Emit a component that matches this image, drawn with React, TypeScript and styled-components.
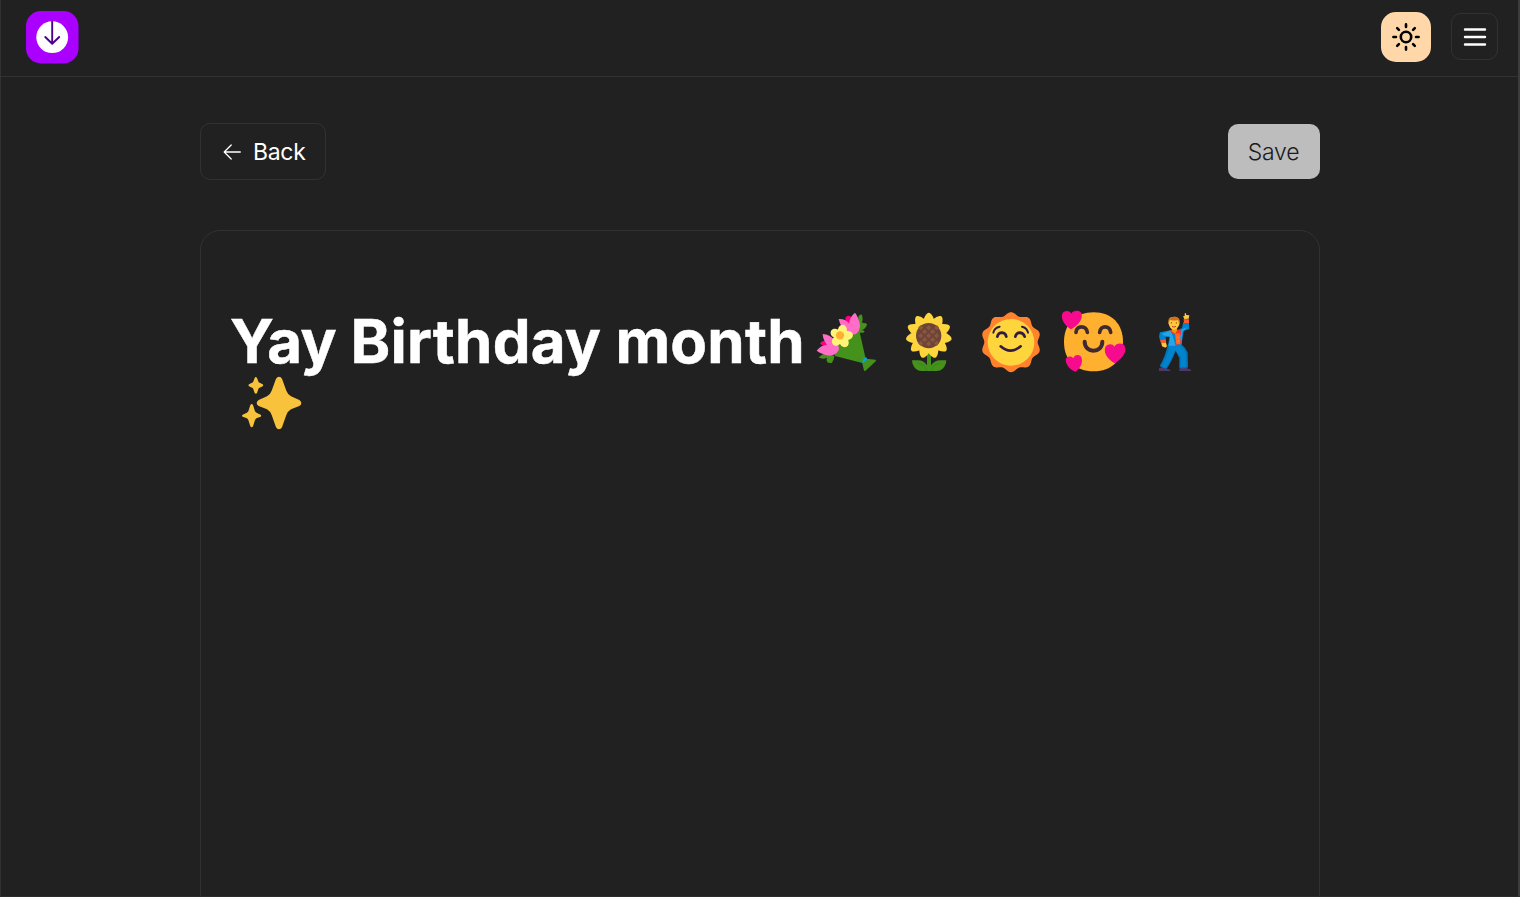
import React from "react";
import styled, { createGlobalStyle } from "styled-components";

const GlobalStyle = createGlobalStyle`
  * { box-sizing: border-box; }
  body {
    margin: 0;
    background: #212121;
    color: #fff;
    font-family: Inter, "Liberation Sans", sans-serif;
    overflow: hidden;
  }
  button { font-family: inherit; cursor: pointer; }
`;

const Page = styled.div`
  height: 897px;
  display: flex;
  flex-direction: column;
  overflow: hidden;
  border-left: 1px solid #323232;
  border-right: 2px solid #3c3c3c;
  border-bottom: 1px solid #2b2b2b;
`;

const Header = styled.header`
  flex: none;
  height: 77px;
  display: flex;
  align-items: flex-start;
  justify-content: space-between;
  padding: 11px 20px 0 25px;
  border-bottom: 1px solid #323232;
`;

const Logo = styled.svg`
  display: block;
  width: 53px;
  height: 53px;
`;

const Actions = styled.div`
  display: flex;
  align-items: center;
  gap: 20px;
  padding-top: 1px;
`;

const IconButton = styled.button<{ $filled?: boolean }>`
  display: flex;
  align-items: center;
  justify-content: center;
  padding: 0;
  width: ${(p) => (p.$filled ? 50 : 47)}px;
  height: ${(p) => (p.$filled ? 50 : 47)}px;
  border-radius: ${(p) => (p.$filled ? 15 : 10)}px;
  border: ${(p) => (p.$filled ? "none" : "1px solid #323232")};
  background: ${(p) => (p.$filled ? "#ffd7a8" : "transparent")};
  margin-top: ${(p) => (p.$filled ? 0 : -1)}px;
  svg { display: block; }
`;

const Main = styled.main`
  flex: 1;
  width: 1120px;
  margin-left: 199px;
  padding-top: 46px;
  display: flex;
  flex-direction: column;
`;

const Toolbar = styled.div`
  display: flex;
  align-items: center;
  justify-content: space-between;
  margin-bottom: 50px;
`;

const BackButton = styled.button`
  display: flex;
  align-items: center;
  width: 126px;
  height: 57px;
  padding: 0 0 0 21px;
  gap: 10px;
  font-size: 23px;
  letter-spacing: -0.3px;
  color: #fff;
  background: transparent;
  border: 1px solid #323232;
  border-radius: 10px;
`;

const SaveButton = styled.button`
  width: 92px;
  height: 55px;
  padding: 0 1px 0 0;
  border: none;
  border-radius: 10px;
  background: #bdbdbd;
  color: #1b1b1b;
  font-size: 23px;
  letter-spacing: -0.2px;
  font-weight: 300;
`;

const Editor = styled.section`
  flex: none;
  height: 760px;
  padding: 81px 30px 0;
  border: 1px solid #323232;
  border-radius: 20px;
`;

const Title = styled.h1`
  margin: 0;
  display: flex;
  flex-wrap: wrap;
  align-items: flex-start;
  font-size: 60px;
  line-height: 60px;
  font-weight: 700;
`;

const TitleText = styled.span`
  width: 575px;
  margin-left: -1px;
  line-height: 58px;
  letter-spacing: 0.2px;
  white-space: nowrap;
  -webkit-text-stroke: 0.5px #fff;
`;

const TightWord = styled.span`
  letter-spacing: -0.5px;
`;

const EmojiSvg = styled.svg`
  display: block;
  width: 82px;
  height: 60px;
  overflow: visible;
`;

function Emoji({ label, x, y = 36, children }: { label: string; x: number; y?: number; children: React.ReactNode }) {
  return (
    <EmojiSvg role="img" aria-label={label} viewBox={`${x} ${y} 246 180`}>
      {children}
    </EmojiSvg>
  );
}

function Bouquet() {
  return (
    <Emoji label="bouquet" x={0}>
      <path d="M162 88L181 172L172 189L90 168L82 148L145 92Z" fill="#44911b" />
      <path d="M41 172Q51 162 68 158L88 168Q88 178 81 188Q73 191 67 187Q63 178 66 173Q53 180 41 172Z" fill="#44911b" />
      <path d="M171 186L184 176L212 179L213 183L181 213L177 212Z" fill="#44911b" />
      <path d="M171 186Q175 174 183 171L187 178L174 190Z" fill="#00a6ed" />
      <path d="M160 50Q165 42 171 44Q175 56 171 68Q186 68 186 75Q180 88 170 91Q178 91 179 95Q174 100 160 98Z" fill="#44911b" />
      <path d="M121 53Q128 44 138 50L143 78L123 73Z" fill="#ff0084" />
      <path d="M101 57Q119 55 132 70Q136 48 150 38Q162 53 165 76Q165 95 151 103Q134 106 122 96Q107 82 101 57Z" fill="#ff6dc6" />
      <path d="M45 131Q48 121 59 123L75 133L68 145Z" fill="#ff0084" />
      <path d="M53 102Q75 104 88 119Q102 133 102 148Q96 165 73 167Q50 163 35 152Q46 136 66 134Q54 120 53 102Z" fill="#ff6dc6" />
      <g fill="#fff478">
        {[10, 82, 154, 226, 298].map((a) => (
          <ellipse key={a} cx="109" cy="90" rx="13.5" ry="16" transform={`rotate(${a} 109 109)`} />
        ))}
      </g>
      <circle cx="105" cy="106" r="12.5" fill="#ffb02e" />
    </Emoji>
  );
}

const CROSSES = [
  [371, 83], [359, 95], [383, 95], [347, 107], [371, 107], [395, 107],
  [359, 119], [383, 119], [371, 131], [347, 83], [395, 83], [347, 130], [395, 130],
];

function Sunflower() {
  return (
    <Emoji label="sunflower" x={246}>
      <path d="M366 155L372 158L378 155V196Q390 181 405 181H424Q423 197 413 206Q406 213 395 213H350Q339 213 332 206Q322 197 321 181H340Q356 181 366 196Z" fill="#44911b" />
      <path d="M338 190Q360 192 366 213M407 190Q383 192 378 213" fill="none" stroke="#3a8118" strokeWidth="2" />
      <g fill="#ffd53e">
        {Array.from({ length: 11 }, (_, i) => (
          <path key={i} d="M352 75C355 54 364 38 371.500 38C379 38 388 54 391 75L371.500 107Z" transform={`rotate(${i * 32.73} 371.500 107)`} />
        ))}
      </g>
      <circle cx="371" cy="107" r="38" fill="#6d4534" />
      <g fill="#8c5543">
        {CROSSES.map(([cx, cy]) => (
          <rect key={`${cx}-${cy}`} x={cx - 5.5} y={cy - 5.5} width="11" height="11" rx="2" transform={`rotate(45 ${cx} ${cy})`} />
        ))}
      </g>
    </Emoji>
  );
}

function SunFace() {
  const points = Array.from({ length: 181 }, (_, i) => {
    const t = (i / 180) * Math.PI * 2;
    const r = 85 + 5 * Math.cos(10 * t);
    return `${(123 + r * Math.sin(t)).toFixed(1)},${(126.5 - r * Math.cos(t)).toFixed(1)}`;
  }).join(" ");
  return (
    <Emoji label="sun with face" x={-3}>
      <polygon points={points} fill="#ff822d" />
      <circle cx="123" cy="127" r="70" fill="#ffd53e" />
      <g fill="none" stroke="#321b41" strokeLinecap="round">
        <path d="M70 98Q73 83 89 80M156 80Q171 83 174 98" strokeWidth="6" />
        <path d="M82 110Q85 98 96 98Q107 99 109 110M136 110Q139 98 150 98Q161 99 164 110" strokeWidth="8" />
        <path d="M92 139Q121 165 152 139" strokeWidth="8" />
      </g>
    </Emoji>
  );
}

function HeartsFace() {
  return (
    <Emoji label="smiling face with hearts" x={243}>
      <path d="M371 37C425 37 459 72 459 126C459 180 425 214 371 214C316 214 282 180 282 126C282 72 316 37 371 37Z" fill="#ffb02e" />
      <g fill="none" stroke="#402a32" strokeWidth="11" strokeLinecap="round">
        <path d="M318 97C319 75 350 75 352 97M389 97C391 75 420 75 422 97" />
        <path d="M344 125C344 161 397 161 397 125" strokeWidth="12" />
      </g>
      <g fill="#f70a8d">
        <path d="M304 41C309 30 327 30 334 38C342 62 317 80 303 88C290 82 272 62 276 43C281 30 300 31 304 41Z" />
        <path d="M433 140C439 128 458 128 464 138C474 160 449 180 435 190C420 183 398 162 406 141C412 130 430 130 433 140Z" />
        <path d="M310 175C313 163 329 162 334 171C341 192 327 207 317 215C305 214 286 195 287 178C292 168 304 167 310 175Z" />
      </g>
    </Emoji>
  );
}

function Dancer() {
  return (
    <Emoji label="man dancing" x={-21}>
      <path d="M57 205Q67 199 76 204L91 210V213H57ZM118 205L138 203L153 209V213H118Z" fill="#533566" />
      <path d="M84 132L124 133Q137 143 143 158L144 202Q130 209 118 203V174L107 153Q94 186 80 206Q69 206 59 198Q76 170 84 132Z" fill="#0074ba" />
      <path d="M88 137L121 138Q134 145 138 163V201H121L123 172L106 151Q93 181 77 204L65 199Q82 171 88 137Z" fill="#0084ce" />
      <path d="M90 91L60 97Q54 110 62 124L78 120L77 111L88 110L84 139L105 142L124 137L131 93L147 87V66H130L126 84L113 91Z" fill="#0084ce" />
      <path d="M93 91L107 137H86L91 110L69 106L66 101ZM128 87L142 82L127 95L124 132L119 134L120 97Z" fill="#26a6e5" />
      <path d="M90 91L106 88L121 90L124 101L120 107L123 132L107 134L106 104L96 100Z" fill="#f8312f" />
      <path d="M105 101L119 99L121 132L109 133Z" fill="#ff6723" />
      <path d="M60 121L77 118L79 128L63 130ZM131 57L147 58V69L132 69Z" fill="#ff592b" />
      <path d="M64 129L78 128L81 139L76 143L66 139Z" fill="#ffc83d" />
      <path d="M134 42Q134 38 137 39L139 45L148 46L146 56L133 57L129 49L134 48Z" fill="#ffc83d" />
      <path d="M96 82H111V92L105 101L95 92Z" fill="#e89b0a" />
      <path d="M87 60Q89 50 103 51Q119 52 118 63L119 70L116 78Q110 89 102 89Q91 87 88 77L85 70Z" fill="#ffc83d" />
      <path d="M86 69Q82 51 97 51Q107 46 116 55Q121 61 117 70L114 60Q101 64 90 59Z" fill="#cf711f" />
      <path d="M94 66V71M109 66V71" stroke="#a55f16" strokeWidth="3" />
      <path d="M96 79Q102 84 108 79" stroke="#bb1d30" strokeWidth="2.500" fill="none" />
      <circle cx="114" cy="112" r="1.500" fill="#ffc83d" />
      <circle cx="115" cy="123" r="1.500" fill="#ffc83d" />
    </Emoji>
  );
}

function Sparkles() {
  return (
    <Emoji label="sparkles" x={33} y={216}>
      <g fill="#f9c23c">
        <path d="M168 236Q172 230 177 230Q183 230 186 236L199 272Q203 283 213 289L238 300Q244 304 244 309Q244 315 238 318L213 328Q203 334 199 345L186 382Q183 388 177 388Q171 388 168 382L155 345Q151 334 141 328L116 318Q110 315 110 309Q110 304 116 300L141 289Q151 283 155 272Z" />
        <path d="M104 234Q107 228 111 234L116 247L128 253Q131 256 128 259L116 265L111 279Q108 284 104 279L99 265L87 259Q84 256 87 253L99 247Z" />
        <path d="M91 315Q95 309 99 315L105 334Q107 338 111 339L122 344Q125 347 122 350L111 354Q107 356 105 360L99 379Q95 385 91 379L85 360Q83 356 79 354L68 350Q64 347 68 344L79 339Q83 338 85 334Z" />
      </g>
    </Emoji>
  );
}

export default function App() {
  return (
    <>
      <GlobalStyle />
      <Page>
        <Header>
          <Logo viewBox="0 0 53 53" aria-label="Home">
            <rect width="52.500" height="52.500" rx="15" fill="#aa00ff" />
            <circle cx="26.200" cy="26.200" r="15.900" fill="#fff" />
            <path d="M26.200 10.500V32.500M19.300 26L26.200 32.800L33.200 26" fill="none" stroke="#4b0092" strokeWidth="1.900" strokeLinecap="round" strokeLinejoin="round" />
          </Logo>
          <Actions>
            <IconButton $filled aria-label="Toggle theme">
              <svg width="30" height="30" viewBox="0 0 30 30" fill="none" stroke="#000" strokeWidth="2.600" strokeLinecap="round">
                <circle cx="15" cy="15" r="5.200" />
                <path d="M15 2.400V5M15 25V27.600M2.400 15H5M25 15H27.600M6.200 6.200L7.900 7.900M22.100 22.100L23.800 23.800M6.200 23.800L7.900 22.100M22.100 7.900L23.800 6.200" />
              </svg>
            </IconButton>
            <IconButton aria-label="Menu">
              <svg width="24" height="20" viewBox="0 0 24 20" fill="none" stroke="#fff" strokeWidth="2.400" strokeLinecap="round">
                <path d="M2 2.500H22M2 10H22M2 17.500H22" />
              </svg>
            </IconButton>
          </Actions>
        </Header>
        <Main>
          <Toolbar>
            <BackButton>
              <svg width="21" height="20" viewBox="0 0 21 20" fill="none" stroke="#fff" strokeWidth="1.300" strokeLinecap="round" strokeLinejoin="round">
                <path d="M18.300 10H2.200M9.200 3L2.200 10L9.200 17" />
              </svg>
              Back
            </BackButton>
            <SaveButton>Save</SaveButton>
          </Toolbar>
          <Editor>
            <Title>
              <TitleText>
                <TightWord>Yay</TightWord> Birthday month
              </TitleText>
              <Bouquet />
              <Sunflower />
              <SunFace />
              <HeartsFace />
              <Dancer />
              <Sparkles />
            </Title>
          </Editor>
        </Main>
      </Page>
    </>
  );
}
